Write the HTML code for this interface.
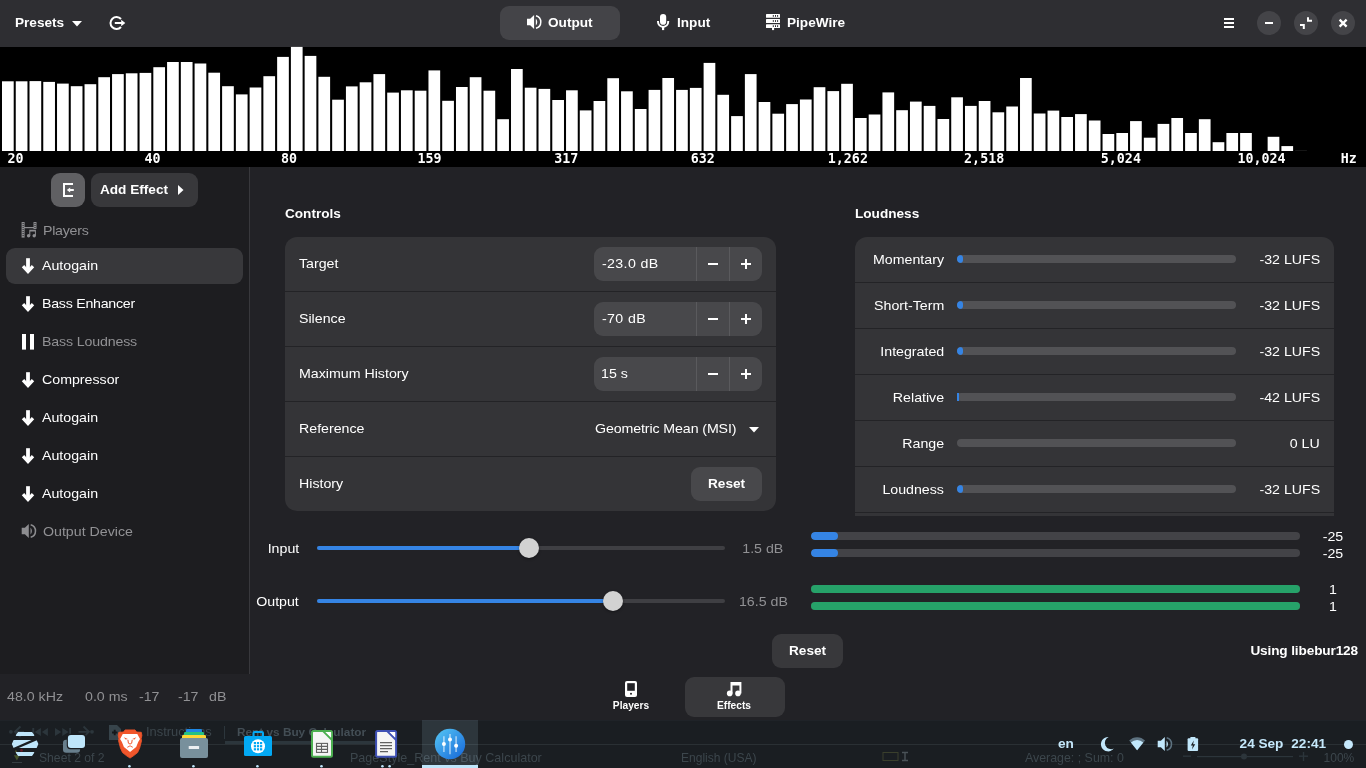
<!DOCTYPE html>
<html lang="en">
<head>
<meta charset="utf-8">
<title>Easy Effects</title>
<style>
*{box-sizing:border-box;margin:0;padding:0}
html,body{width:1366px;height:768px;overflow:hidden;background:#222226}
body{position:relative;font-family:"Liberation Sans",Arial,sans-serif;font-size:14.2px;color:#fff;-webkit-font-smoothing:antialiased}
#root{position:absolute;left:0;top:0;width:1366px;height:768px;will-change:transform}
.abs{position:absolute}
.t{position:absolute;white-space:nowrap;line-height:18px;height:18px;font-size:13.6px;transform:scaleX(1.044);transform-origin:0 50%;margin-top:1px}
.t.b{font-weight:700;font-size:13.6px;transform:none;margin-top:0}
.t.r{transform-origin:100% 50%}
.t.c{transform-origin:50% 50%}
.dim{color:#919194}
svg{position:absolute;display:block;overflow:visible}
/* header */
#hdr{position:absolute;left:0;top:0;width:1366px;height:47px;background:#2e2e32}
#outbtn{position:absolute;left:500px;top:6px;width:120px;height:34px;border-radius:9px;background:#444448}
.wbtn{position:absolute;top:11px;width:24px;height:24px;border-radius:12px;background:#444448}
.spec{left:0;top:47px}
/* sidebar */
#side{position:absolute;left:0;top:167px;width:249px;height:507px;background:#1d1d20}
#sidesep{position:absolute;left:249px;top:167px;width:1px;height:507px;background:#38383c}
.sbtn{position:absolute;top:173px;height:34px;border-radius:9px}
#selrow{position:absolute;left:6px;top:248px;width:237px;height:36px;border-radius:9px;background:#38383b}
/* cards */
.card{position:absolute;background:#343437;border-radius:12px;overflow:hidden}
.div{position:absolute;left:0;width:100%;height:1px;background:#232326}
.spin{position:absolute;left:309px;width:168px;height:34px;border-radius:9px;background:#48484b}
.spin i{position:absolute;top:0;width:1px;height:34px;background:#5a5a5d}
.pm{position:absolute;background:#fff}
.lv{position:absolute;height:8px;border-radius:4px;background:#434347;overflow:hidden}
.card .lv{background:#525255}
.lv b{position:absolute;left:0;top:0;height:8px;display:block}
.btn{position:absolute;height:34px;border-radius:9px;background:#38383b}
/* sliders */
.trk{position:absolute;left:317px;width:408px;height:4px;border-radius:2px;background:#3f3f43}
.trk b{position:absolute;left:0;top:0;height:4px;border-radius:2px;background:#3584e4;display:block}
.knob{position:absolute;width:20px;height:20px;border-radius:10px;background:#d2d2d2;box-shadow:0 1px 3px rgba(0,0,0,.4)}
/* taskbar */
#task{position:absolute;left:0;top:720px;width:1366px;height:48px;background:#1a1e22;overflow:hidden;box-shadow:inset 0 1px 0 #1f2328}
.ghost{position:absolute;white-space:nowrap;color:#3c464c;font-size:15px;line-height:18px}
</style>
</head>
<body>
<div id="root">
<!-- ================= HEADER ================= -->
<div id="hdr">
  <span class="t b" style="left:15px;top:14px">Presets</span>
  <svg style="left:72px;top:21px" width="10" height="6" viewBox="0 0 10 6"><path d="M0 0h10l-5 5.5z" fill="#fff"/></svg>
  <svg style="left:0;top:0" width="1366" height="47"><path d="M121 19.03A6 6 0 1 0 121 26.97" fill="none" stroke="#fff" stroke-width="2"/><path d="M114.8 22h6.4v-2.2l4.1 3.2-4.1 3.2V24h-6.4z" fill="#fff"/></svg>
  <div id="outbtn"></div>
  <svg style="left:0;top:0" width="1366" height="47"><g fill="#fff"><path d="M527 18.8h3.2l3.9-3.8v14l-3.9-3.8H527z"/><path d="M535.8 18.4Q538.7 22 535.8 25.6z"/></g><path d="M536 15.7A6.54 6.54 0 0 1 536 28.3" fill="none" stroke="#fff" stroke-width="1.5"/></svg>
  <span class="t b" style="left:548px;top:14px">Output</span>
  <svg style="left:0;top:0" width="1366" height="47"><rect x="660" y="14" width="6.2" height="10.8" rx="3.1" fill="#fff"/><path d="M658 21.1v.7a5.1 5.1 0 0 0 10.2 0v-.7" fill="none" stroke="#fff" stroke-width="2"/><rect x="662" y="27" width="2.2" height="3.1" fill="#fff"/></svg>
  <span class="t b" style="left:677px;top:14px">Input</span>
  <svg style="left:0;top:0" width="1366" height="47"><g fill="#fff"><rect x="766" y="14" width="14" height="3.8" rx=".5"/><rect x="766" y="19.1" width="14" height="3.8" rx=".5"/><rect x="766" y="24.2" width="14" height="3.8" rx=".5"/><rect x="772" y="27.5" width="2.1" height="2.6"/></g><g fill="#2e2e32"><rect x="772.8" y="15" width="1" height="1.8"/><rect x="775" y="15" width="1" height="1.8"/><rect x="777.1" y="15" width="1" height="1.8"/><rect x="772.8" y="20.1" width="1" height="1.8"/><rect x="775" y="20.1" width="1" height="1.8"/><rect x="777.1" y="20.1" width="1" height="1.8"/><rect x="772.8" y="25.2" width="1" height="1.8"/><rect x="775" y="25.2" width="1" height="1.8"/><rect x="777.1" y="25.2" width="1" height="1.8"/></g></svg>
  <span class="t b" style="left:787px;top:14px">PipeWire</span>
  <svg style="left:1224px;top:18px" width="10" height="10" viewBox="0 0 10 10"><path d="M0 0h10v2H0zM0 4h10v2H0zM0 8h10v2H0z" fill="#fff"/></svg>
  <div class="wbtn" style="left:1257px"></div>
  <div class="wbtn" style="left:1294px"></div>
  <div class="wbtn" style="left:1331px"></div>
  <svg style="left:0;top:0" width="1366" height="47"><rect x="1265" y="22" width="8" height="2" fill="#fff"/><g fill="none" stroke="#fff" stroke-width="2"><path d="M1308 17.3v3.5h4"/><path d="M1300 25h3.8v4"/><path d="M1339.600 19.600l7 7M1346.600 19.600l-7 7" stroke-width="2.300"/></g></svg>
</div>
<!-- ================= SPECTRUM ================= -->
<svg class="spec" width="1366" height="120" viewBox="0 47 1366 120"><rect x="0" y="47" width="1366" height="120" fill="#000"/><g fill="#fff"><rect x="2.00" y="81.3" width="11.7" height="69.7"/><rect x="15.76" y="81.3" width="11.7" height="69.7"/><rect x="29.51" y="81.1" width="11.7" height="69.9"/><rect x="43.27" y="81.9" width="11.7" height="69.1"/><rect x="57.03" y="83.6" width="11.7" height="67.4"/><rect x="70.78" y="86.2" width="11.7" height="64.8"/><rect x="84.54" y="84.2" width="11.7" height="66.8"/><rect x="98.30" y="77.2" width="11.7" height="73.8"/><rect x="112.06" y="74.1" width="11.7" height="76.9"/><rect x="125.81" y="73.3" width="11.7" height="77.7"/><rect x="139.57" y="72.9" width="11.7" height="78.1"/><rect x="153.33" y="67.2" width="11.7" height="83.8"/><rect x="167.08" y="62.0" width="11.7" height="89.0"/><rect x="180.84" y="62.0" width="11.7" height="89.0"/><rect x="194.60" y="63.5" width="11.7" height="87.5"/><rect x="208.35" y="72.7" width="11.7" height="78.3"/><rect x="222.11" y="86.2" width="11.7" height="64.8"/><rect x="235.87" y="94.4" width="11.7" height="56.6"/><rect x="249.63" y="87.5" width="11.7" height="63.5"/><rect x="263.38" y="76.2" width="11.7" height="74.8"/><rect x="277.14" y="56.9" width="11.7" height="94.1"/><rect x="290.90" y="46.9" width="11.7" height="104.1"/><rect x="304.65" y="55.9" width="11.7" height="95.1"/><rect x="318.41" y="76.8" width="11.7" height="74.2"/><rect x="332.17" y="99.7" width="11.7" height="51.3"/><rect x="345.93" y="86.4" width="11.7" height="64.6"/><rect x="359.68" y="82.3" width="11.7" height="68.7"/><rect x="373.44" y="74.1" width="11.7" height="76.9"/><rect x="387.20" y="92.6" width="11.7" height="58.4"/><rect x="400.95" y="90.3" width="11.7" height="60.7"/><rect x="414.71" y="90.7" width="11.7" height="60.3"/><rect x="428.47" y="70.4" width="11.7" height="80.6"/><rect x="442.22" y="100.8" width="11.7" height="50.2"/><rect x="455.98" y="87.0" width="11.7" height="64.0"/><rect x="469.74" y="77.2" width="11.7" height="73.8"/><rect x="483.50" y="90.7" width="11.7" height="60.3"/><rect x="497.25" y="119.2" width="11.7" height="31.8"/><rect x="511.01" y="69.0" width="11.7" height="82.0"/><rect x="524.77" y="87.7" width="11.7" height="63.3"/><rect x="538.52" y="88.9" width="11.7" height="62.1"/><rect x="552.28" y="100.0" width="11.7" height="51.0"/><rect x="566.04" y="90.3" width="11.7" height="60.7"/><rect x="579.79" y="110.4" width="11.7" height="40.6"/><rect x="593.55" y="101.0" width="11.7" height="50.0"/><rect x="607.31" y="78.2" width="11.7" height="72.8"/><rect x="621.06" y="91.3" width="11.7" height="59.7"/><rect x="634.82" y="109.0" width="11.7" height="42.0"/><rect x="648.58" y="89.9" width="11.7" height="61.1"/><rect x="662.34" y="78.0" width="11.7" height="73.0"/><rect x="676.09" y="89.9" width="11.7" height="61.1"/><rect x="689.85" y="87.9" width="11.7" height="63.1"/><rect x="703.61" y="62.9" width="11.7" height="88.1"/><rect x="717.36" y="94.8" width="11.7" height="56.2"/><rect x="731.12" y="116.1" width="11.7" height="34.9"/><rect x="744.88" y="74.1" width="11.7" height="76.9"/><rect x="758.63" y="102.0" width="11.7" height="49.0"/><rect x="772.39" y="113.7" width="11.7" height="37.3"/><rect x="786.15" y="104.1" width="11.7" height="46.9"/><rect x="799.91" y="99.5" width="11.7" height="51.5"/><rect x="813.66" y="87.2" width="11.7" height="63.8"/><rect x="827.42" y="91.1" width="11.7" height="59.9"/><rect x="841.18" y="83.8" width="11.7" height="67.2"/><rect x="854.93" y="118.0" width="11.7" height="33.0"/><rect x="868.69" y="114.5" width="11.7" height="36.5"/><rect x="882.45" y="92.4" width="11.7" height="58.6"/><rect x="896.20" y="110.2" width="11.7" height="40.8"/><rect x="909.96" y="101.6" width="11.7" height="49.4"/><rect x="923.72" y="105.9" width="11.7" height="45.1"/><rect x="937.48" y="119.0" width="11.7" height="32.0"/><rect x="951.23" y="97.3" width="11.7" height="53.7"/><rect x="964.99" y="105.9" width="11.7" height="45.1"/><rect x="978.75" y="101.0" width="11.7" height="50.0"/><rect x="992.50" y="112.3" width="11.7" height="38.7"/><rect x="1006.26" y="106.5" width="11.7" height="44.5"/><rect x="1020.02" y="78.0" width="11.7" height="73.0"/><rect x="1033.77" y="113.5" width="11.7" height="37.5"/><rect x="1047.53" y="110.6" width="11.7" height="40.4"/><rect x="1061.29" y="117.0" width="11.7" height="34.0"/><rect x="1075.05" y="114.1" width="11.7" height="36.9"/><rect x="1088.80" y="120.5" width="11.7" height="30.5"/><rect x="1102.56" y="134.0" width="11.7" height="17.0"/><rect x="1116.32" y="133.0" width="11.7" height="18.0"/><rect x="1130.07" y="121.1" width="11.7" height="29.9"/><rect x="1143.83" y="137.7" width="11.7" height="13.3"/><rect x="1157.59" y="123.9" width="11.7" height="27.1"/><rect x="1171.35" y="118.0" width="11.7" height="33.0"/><rect x="1185.10" y="133.0" width="11.7" height="18.0"/><rect x="1198.86" y="119.2" width="11.7" height="31.8"/><rect x="1212.62" y="142.2" width="11.7" height="8.8"/><rect x="1226.37" y="133.0" width="11.7" height="18.0"/><rect x="1240.13" y="133.0" width="11.7" height="18.0"/><rect x="1267.64" y="136.8" width="11.7" height="14.2"/><rect x="1281.40" y="146.1" width="11.7" height="4.9"/><rect x="1295.16" y="150.4" width="11.7" height="0.6" opacity=".15"/></g><g fill="#fff" font-family="'DejaVu Sans Mono','Liberation Mono',monospace" font-weight="700" font-size="13.33"><text x="7.6" y="163">20</text><text x="144.5" y="163">40</text><text x="281.1" y="163">80</text><text x="417.4" y="163">159</text><text x="554.2" y="163">317</text><text x="690.7" y="163">632</text><text x="827.8" y="163">1,262</text><text x="964.1" y="163">2,518</text><text x="1100.8" y="163">5,024</text><text x="1237.4" y="163">10,024</text><text x="1340.8" y="163">Hz</text></g></svg>
<!-- ================= SIDEBAR ================= -->
<div id="side"></div><div id="sidesep"></div>
<div class="sbtn" style="left:51px;width:34px;background:#606063"></div>
<div class="sbtn" style="left:91px;width:107px;background:#38383b"></div>
<svg style="left:0;top:0" width="260" height="260"><path d="M73 184H64v12h9" fill="none" stroke="#fff" stroke-width="2"/><path d="M73.8 189h-3.6v-1.4l-3.4 2.4 3.4 2.4V191h3.6z" fill="#fff"/></svg>
<span class="t b" style="left:100px;top:181px">Add Effect</span>
<svg style="left:178px;top:185px" width="6" height="10" viewBox="0 0 6 10"><path d="M0 0l5.5 5L0 10z" fill="#fff"/></svg>
<div id="selrow"></div>
<span class="t dim" style="left:43px;top:221px;letter-spacing:-.25px">Players</span>
<span class="t" style="left:42px;top:256px">Autogain</span>
<span class="t" style="left:42px;top:294px;letter-spacing:-.25px">Bass Enhancer</span>
<span class="t dim" style="left:42px;top:332px;letter-spacing:-.15px">Bass Loudness</span>
<span class="t" style="left:42px;top:370px">Compressor</span>
<span class="t" style="left:42px;top:408px">Autogain</span>
<span class="t" style="left:42px;top:446px">Autogain</span>
<span class="t" style="left:42px;top:484px">Autogain</span>
<span class="t dim" style="left:43px;top:522px">Output Device</span>
<svg style="left:0;top:0" width="260" height="680">
<g fill="#8d8d90"><rect x="21.6" y="222" width="3" height="15.6"/><rect x="33.5" y="222" width="3" height="7"/><rect x="24" y="227" width="10" height="1.2"/><circle cx="28.6" cy="235.8" r="1.7"/><circle cx="34.2" cy="235.8" r="1.7"/><path d="M29.3 235.8v-6h6.6v6h-1v-4.4h-4.6v4.4z"/></g>
<g fill="#1d1d20"><rect x="22.6" y="223" width="1" height="1"/><rect x="22.6" y="225" width="1" height="1"/><rect x="22.6" y="227" width="1" height="1"/><rect x="22.6" y="229" width="1" height="1"/><rect x="22.6" y="231" width="1" height="1"/><rect x="22.6" y="233" width="1" height="1"/><rect x="22.6" y="235" width="1" height="1"/><rect x="34.5" y="223" width="1" height="1"/><rect x="34.5" y="225" width="1" height="1"/><rect x="34.5" y="227" width="1" height="1"/></g>
<g id="arr"><rect x="26.100" y="258.200" width="3.800" height="11" fill="#fff"/><path d="M23 266.100l5 5.400 5-5.400" fill="none" stroke="#fff" stroke-width="3.300"/></g>
<use href="#arr" y="38"/><use href="#arr" y="114"/><use href="#arr" y="152"/><use href="#arr" y="190"/><use href="#arr" y="228"/>
<rect x="22" y="334" width="4" height="15.6" fill="#fff"/><rect x="30" y="334" width="4" height="15.6" fill="#fff"/>
<g transform="translate(-505.3 509)"><g fill="#8d8d90"><path d="M527 18.8h3.2l3.9-3.8v14l-3.9-3.8H527z"/><path d="M535.8 18.4Q538.7 22 535.8 25.6z"/></g><path d="M536 15.7A6.54 6.54 0 0 1 536 28.3" fill="none" stroke="#8d8d90" stroke-width="1.5"/></g>
</svg>

<!-- ================= MAIN ================= -->
<span class="t b" style="left:285px;top:205px">Controls</span>
<div class="card" style="left:285px;top:237px;width:491px;height:274px">
  <div class="div" style="top:54px"></div><div class="div" style="top:109px"></div><div class="div" style="top:164px"></div><div class="div" style="top:219px"></div>
  <span class="t" style="left:14px;top:17px">Target</span>
  <span class="t" style="left:14px;top:72px">Silence</span>
  <span class="t" style="left:14px;top:127px">Maximum History</span>
  <span class="t" style="left:14px;top:182px">Reference</span>
  <span class="t" style="left:14px;top:237px">History</span>
  <div class="spin" style="top:10px"><i style="left:102px"></i><i style="left:135px"></i><span class="t" style="left:8px;top:7px;letter-spacing:.35px">-23.0 dB</span><div class="pm" style="left:114px;top:16px;width:10px;height:2px"></div><div class="pm" style="left:147px;top:16px;width:10px;height:2px"></div><div class="pm" style="left:151px;top:12px;width:2px;height:10px"></div></div>
  <div class="spin" style="top:65px"><i style="left:102px"></i><i style="left:135px"></i><span class="t" style="left:8px;top:7px;letter-spacing:.35px">-70 dB</span><div class="pm" style="left:114px;top:16px;width:10px;height:2px"></div><div class="pm" style="left:147px;top:16px;width:10px;height:2px"></div><div class="pm" style="left:151px;top:12px;width:2px;height:10px"></div></div>
  <div class="spin" style="top:120px"><i style="left:102px"></i><i style="left:135px"></i><span class="t" style="left:7px;top:7px">15 s</span><div class="pm" style="left:114px;top:16px;width:10px;height:2px"></div><div class="pm" style="left:147px;top:16px;width:10px;height:2px"></div><div class="pm" style="left:151px;top:12px;width:2px;height:10px"></div></div>
  <span class="t" style="left:310px;top:182px;letter-spacing:-.1px">Geometric Mean (MSI)</span>
  <svg style="left:464px;top:189.600px" width="10" height="6" viewBox="0 0 10 6"><path d="M0 0h10l-5 5.5z" fill="#fff"/></svg>
  <div class="btn" style="left:406px;top:230px;width:71px;background:#48484b"></div>
  <span class="t b" style="left:423px;top:238px">Reset</span>
</div>
<span class="t b" style="left:855px;top:205px">Loudness</span>
<div class="card" style="left:855px;top:237px;width:479px;height:279px;border-radius:12px 12px 0 0">
  <div class="div" style="top:45px"></div><div class="div" style="top:91px"></div><div class="div" style="top:137px"></div><div class="div" style="top:183px"></div><div class="div" style="top:229px"></div><div class="div" style="top:275px"></div>
  <span class="t r" style="right:390px;top:13px">Momentary</span><div class="lv" style="left:102px;top:18px;width:279px"><b style="width:6px;border-radius:4px;background:#3584e4"></b></div><span class="t r" style="right:14px;top:13px">-32 LUFS</span>
  <span class="t r" style="right:390px;top:59px">Short-Term</span><div class="lv" style="left:102px;top:64px;width:279px"><b style="width:6px;border-radius:4px;background:#3584e4"></b></div><span class="t r" style="right:14px;top:59px">-32 LUFS</span>
  <span class="t r" style="right:390px;top:105px">Integrated</span><div class="lv" style="left:102px;top:110px;width:279px"><b style="width:6px;border-radius:4px;background:#3584e4"></b></div><span class="t r" style="right:14px;top:105px">-32 LUFS</span>
  <span class="t r" style="right:390px;top:151px">Relative</span><div class="lv" style="left:102px;top:156px;width:279px"></div><div class="abs" style="left:102px;top:156px;width:2px;height:8px;background:#3584e4"></div><span class="t r" style="right:14px;top:151px">-42 LUFS</span>
  <span class="t r" style="right:390px;top:197px">Range</span><div class="lv" style="left:102px;top:202px;width:279px"></div><span class="t r" style="right:14px;top:197px">0 LU</span>
  <span class="t r" style="right:390px;top:243px">Loudness</span><div class="lv" style="left:102px;top:248px;width:279px"><b style="width:6px;border-radius:4px;background:#3584e4"></b></div><span class="t r" style="right:14px;top:243px">-32 LUFS</span>
</div>
<!-- sliders -->
<span class="t r" style="right:1067px;top:539px">Input</span>
<div class="trk" style="top:546px"><b style="width:212px"></b></div><div class="knob" style="left:519px;top:538px"></div>
<span class="t r dim" style="right:583px;top:539px">1.5 dB</span>
<span class="t r" style="right:1067px;top:592px">Output</span>
<div class="trk" style="top:599px"><b style="width:296px"></b></div><div class="knob" style="left:603px;top:591px"></div>
<span class="t r dim" style="right:578px;top:592px">16.5 dB</span>
<!-- level meters -->
<div class="lv" style="left:811px;top:532px;width:489px"><b style="width:27px;border-radius:4px;background:#3584e4"></b></div>
<div class="lv" style="left:811px;top:549px;width:489px"><b style="width:27px;border-radius:4px;background:#3584e4"></b></div>
<div class="lv" style="left:811px;top:585px;width:489px"><b style="width:489px;background:#26a269"></b></div>
<div class="lv" style="left:811px;top:602px;width:489px"><b style="width:489px;background:#26a269"></b></div>
<span class="t c" style="left:1303px;width:60px;text-align:center;top:527px">-25</span>
<span class="t c" style="left:1303px;width:60px;text-align:center;top:544px">-25</span>
<span class="t c" style="left:1303px;width:60px;text-align:center;top:580px">1</span>
<span class="t c" style="left:1303px;width:60px;text-align:center;top:597px">1</span>
<div class="btn" style="left:772px;top:634px;width:71px"></div>
<span class="t b" style="left:789px;top:642px">Reset</span>
<span class="t b" style="right:8px;top:642px;letter-spacing:-.12px">Using libebur128</span>

<!-- ================= BOTTOM ================= -->
<span class="t dim" style="left:7px;top:687px">48.0 kHz</span>
<span class="t dim" style="left:85px;top:687px">0.0 ms</span>
<span class="t dim" style="left:139px;top:687px">-17</span>
<span class="t dim" style="left:178px;top:687px">-17</span>
<span class="t dim" style="left:209px;top:687px">dB</span>
<div class="abs" style="left:685px;top:677px;width:100px;height:40px;border-radius:9px;background:#38383b"></div>
<span class="t b" style="left:581px;width:100px;text-align:center;top:697px;font-weight:700;font-size:10.2px">Players</span>
<span class="t b" style="left:684px;width:100px;text-align:center;top:697px;font-weight:700;font-size:10.2px">Effects</span>
<svg style="left:0;top:0" width="1366" height="720"><rect x="625" y="681" width="12" height="16" rx="2" fill="#fff"/><rect x="627.2" y="683.2" width="7.6" height="7.6" fill="#222226"/><circle cx="631" cy="693.7" r="1" fill="#222226"/>
<g fill="#fff"><circle cx="729.7" cy="693.4" r="2.8"/><circle cx="738" cy="693.4" r="2.8"/><path d="M730.5 693.4V682h10.9v11.4h-2V685.6h-6.9v7.8z"/></g></svg>

<!-- ================= TASKBAR ================= -->
<div id="task">
  <div class="abs" style="left:0;top:24px;width:1366px;height:1px;background:#2a3034"></div>
  <span class="ghost" style="left:146px;top:3px;font-size:12.87px">Instructions</span>
  <span class="ghost" style="left:237px;top:3px;font-size:11.8px;font-weight:700;color:#434e55">Rent vs Buy Calculator</span>
  <span class="ghost" style="left:39px;top:29px;font-size:12.16px">Sheet 2 of 2</span>
  <span class="ghost" style="left:350px;top:29px;font-size:12.56px">PageStyle_Rent vs Buy Calculator</span>
  <span class="ghost" style="left:681px;top:29px;font-size:12.04px">English (USA)</span>
  <span class="ghost" style="left:1025px;top:29px;font-size:12.38px">Average: ; Sum: 0</span>
  <span class="ghost" style="left:1323.5px;top:29px;font-size:12.04px">100%</span>
  <div class="abs" style="left:422px;top:0;width:56px;height:48px;background:rgba(191,230,251,.12)"></div>
  <div class="abs" style="left:422px;top:45px;width:56px;height:3px;background:#bfe6fb"></div>
  <svg style="left:0;top:0" width="1366" height="48" viewBox="0 720 1366 48">
<defs><linearGradient id="eeg" x1="0" y1="0" x2="1" y2="1"><stop offset="0" stop-color="#56c8f5"/><stop offset="1" stop-color="#1565d8"/></linearGradient>
<clipPath id="zc"><ellipse cx="24.8" cy="744" rx="13.4" ry="12.2"/></clipPath></defs>
<!-- ghost libreoffice nav -->
<g fill="#2c363c" stroke="none"><circle cx="10.900" cy="731.800" r="1.900"/><circle cx="92" cy="731.800" r="1.900"/><path d="M32.300 728h1.900v8h-1.900zM34.600 732l6.300-4v8zM41.900 732l6-4v8zM55 728l6.300 4-6.300 4zM62.300 728l6.300 4-6.300 4zM69.200 728h1.800v8h-1.800z"/><path d="M109 725h8l4 4v11h-12z" fill="#37444b"/><path d="M224 726h1v13h-1z"/><rect x="225" y="741" width="150" height="3"/></g>
<g fill="none" stroke="#2c363c" stroke-width="1.800"><path d="M20.500 726.500l-5.600 5.300 5.600 5.300M15 731.800h9M83.500 726.500l5.400 5.300-5.400 5.300M78.500 731.800h10"/></g>
<path d="M112 732.500h5.400M114.700 729.800v5.400" stroke="#14181b" stroke-width="1.900"/>
<!-- zorin -->
<circle cx="21.500" cy="750.400" r="1.300" fill="#6b1a28"/><path d="M13.900 755.300h6l-3 5.300z" fill="#46542a"/><path d="M15.600 750.500l1.300 3" stroke="#5c5f2a" stroke-width="1.200"/><rect x="12" y="762" width="10" height="1" fill="#353d42"/>
<g fill="#bfe6fb" stroke="#bfe6fb" stroke-width="1.200" stroke-linejoin="round"><path d="M18.400 732.500h13.300l2 2.800h-17.300z"/><path d="M14 740.600h22.200l1.500 3.500-1.500 3.400h-22.200l-1.500-3.400z"/><path d="M16.400 752.500h17.300l-2 2.900h-13.300z"/></g>
<path d="M13.200 749.300L37 738.900" stroke="#1a1e22" stroke-width="2.300"/>
<!-- windows -->
<rect x="63" y="739.800" width="17.100" height="12.900" rx="3.200" fill="#687f8d"/><rect x="66.800" y="733.800" width="19.400" height="15.400" rx="3.600" fill="#1a1e22"/><rect x="67.900" y="734.900" width="17.100" height="13.100" rx="3" fill="#bfe6fb"/>
<!-- brave -->
<path d="M135.00 729.90 136.60 732.00 141.30 732.30 141.90 735.40 141.20 738.50 141.50 741.00 139.70 747.90 137.60 752.60 133.50 755.80 130.05 758.10 126.60 755.80 122.50 752.60 120.40 747.90 118.60 741.00 118.90 738.50 118.20 735.40 118.80 732.30 123.50 732.00 125.10 729.90z" fill="#f1562b" stroke="#f1562b" stroke-width=".8" stroke-linejoin="round"/>
<path d="M137.30 734.10 140.00 739.00 138.20 742.00 136.20 746.90 133.40 749.20 130.05 752.10 126.70 749.20 123.90 746.90 121.90 742.00 120.10 739.00 122.80 734.10z" fill="#fff"/>
<path d="M123.800 737.300l4 1.600-2.200.5zM136.300 737.300l-4 1.600 2.200.5z" fill="#f1562b"/>
<path d="M127.900 739.800l.5 3.400q1.650 1.700 3.300 0l.5-3.400" fill="none" stroke="#f1562b" stroke-width="1"/>
<path d="M127.300 747.300l2.750-1.500 2.750 1.500" fill="none" stroke="#f1562b" stroke-width=".9"/>
<!-- files -->
<rect x="186" y="729" width="16" height="5" rx="1.2" fill="#1e88e5"/><rect x="184" y="732" width="20" height="5" rx="1.2" fill="#26c281"/><rect x="182" y="735" width="24" height="5" rx="1.2" fill="#fdd835"/><rect x="180" y="738" width="28" height="20" rx="2" fill="#78909c"/><rect x="188.700" y="746" width="10.400" height="3" rx=".6" fill="#eceff1"/>
<!-- store -->
<rect x="253.500" y="732" width="9.500" height="7" rx="1" fill="none" stroke="#03a9f4" stroke-width="2"/><rect x="244" y="736" width="28" height="20" rx="1.500" fill="#03a9f4"/><circle cx="258" cy="746.200" r="7" fill="#fff"/>
<g fill="#03a9f4"><rect x="253.800" y="742" width="2.200" height="2.200"/><rect x="256.900" y="742" width="2.200" height="2.200"/><rect x="260" y="742" width="2.200" height="2.200"/><rect x="253.800" y="745.100" width="2.200" height="2.200"/><rect x="256.900" y="745.100" width="2.200" height="2.200"/><rect x="260" y="745.100" width="2.200" height="2.200"/><rect x="253.800" y="748.200" width="2.200" height="2.200"/><rect x="256.900" y="748.200" width="2.200" height="2.200"/><rect x="260" y="748.200" width="2.200" height="2.200"/></g>
<!-- calc -->
<rect x="312" y="731" width="20" height="25.800" rx="1.500" fill="#f5f5f5" stroke="#4caf50" stroke-width="2"/><path d="M323 731l9 9" stroke="#4caf50" stroke-width="1.800"/><path d="M325.500 731.900h5.600v5.600z" fill="#fff"/>
<g fill="none" stroke="#616161" stroke-width="1.100"><rect x="316.500" y="743.400" width="11" height="9"/><path d="M316.500 746.400h11M316.500 749.400h11M321.500 743.400v9"/></g>
<!-- writer -->
<rect x="376.100" y="731" width="20" height="25.800" rx="1.500" fill="#f5f5f5" stroke="#3f51b5" stroke-width="2"/><path d="M387.100 731l9 9" stroke="#3f51b5" stroke-width="1.800"/><path d="M389.600 731.900h5.600v5.600z" fill="#fff"/>
<path d="M380 742.600h12M380 745.600h12M380 748.600h12M380 751.600h8" stroke="#616161" stroke-width="1.100"/>
<!-- easyeffects -->
<circle cx="450" cy="744" r="15.200" fill="url(#eeg)"/>
<g stroke="#fff" stroke-opacity=".55" stroke-width="1.600"><path d="M443.900 736.300v15.700M450 734.100v20.100M456.100 736.300v15.700"/></g>
<g fill="#fff"><circle cx="443.900" cy="744.100" r="2"/><circle cx="450" cy="739.500" r="2"/><circle cx="456.100" cy="745.800" r="2"/></g>
<!-- indicator dots -->
<g fill="#bfe6fb"><circle cx="129.400" cy="766.300" r="1.300"/><circle cx="193.400" cy="766.300" r="1.300"/><circle cx="257.400" cy="766.300" r="1.300"/><circle cx="321.500" cy="766.300" r="1.300"/><circle cx="382.400" cy="766.300" r="1.300"/><circle cx="389.600" cy="766.300" r="1.300"/></g>
<!-- tray -->
<path d="M1108.600 737a7.200 7.200 0 1 0 5.200 11.600a6.300 6.300 0 0 1-5.200-11.600z" fill="#c1e7fb"/>
<path d="M1137.100 750.200l-7.900-9.600a11 11 0 0 1 15.800 0z" fill="#5d7280"/><path d="M1137.100 750.200l-6.200-7.600a8.600 8.600 0 0 1 12.400 0z" fill="#c1e7fb"/>
<g fill="#c1e7fb"><path d="M1157.700 740.800h3.200l3.900-3.800v14l-3.900-3.800h-3.200z"/><path d="M1166.500 740.400q2.900 3.600 0 7.200z"/></g><path d="M1166.700 737.700a6.540 6.540 0 0 1 0 12.600" fill="none" stroke="#5d7280" stroke-width="1.500"/>
<rect x="1187.600" y="738.200" width="10.500" height="12.900" rx="1" fill="#c1e7fb"/><rect x="1190.400" y="737" width="5" height="2" fill="#c1e7fb"/><path d="M1193.800 740.400l-3 5h2l-.8 4.200 3.200-5.400h-2.100z" fill="#1a1e22"/>
<!-- ghost status right -->
<g fill="#2c353b"><rect x="1183" y="755.500" width="8" height="1.400"/><rect x="1197" y="756" width="96" height="1.200"/><circle cx="1244" cy="756.500" r="3"/><rect x="1299" y="755.500" width="9" height="1.400"/><rect x="1302.800" y="752" width="1.400" height="9"/></g>
<rect x="883" y="752.500" width="15" height="8" fill="none" stroke="#3a3f2c" stroke-width="1"/><path d="M902 752.500h6M902 760.500h6M905 752.500v8" stroke="#4a5257" stroke-width="1.400" fill="none"/>
</svg>
  <span class="t b" style="left:1058px;top:15px;font-weight:700;font-size:13.6px;color:#c5e8fb">en</span>
  <span class="t b" style="left:1239.6px;top:15px;font-weight:700;font-size:13.6px;color:#c5e8fb">24 Sep</span>
  <span class="t b" style="left:1291.3px;top:15px;font-weight:700;font-size:13.6px;color:#c5e8fb">22:41</span>
  <div class="abs" style="left:1344px;top:20px;width:9px;height:9px;border-radius:5px;background:#c5e8fb"></div>
</div>

</div>
</body>
</html>
